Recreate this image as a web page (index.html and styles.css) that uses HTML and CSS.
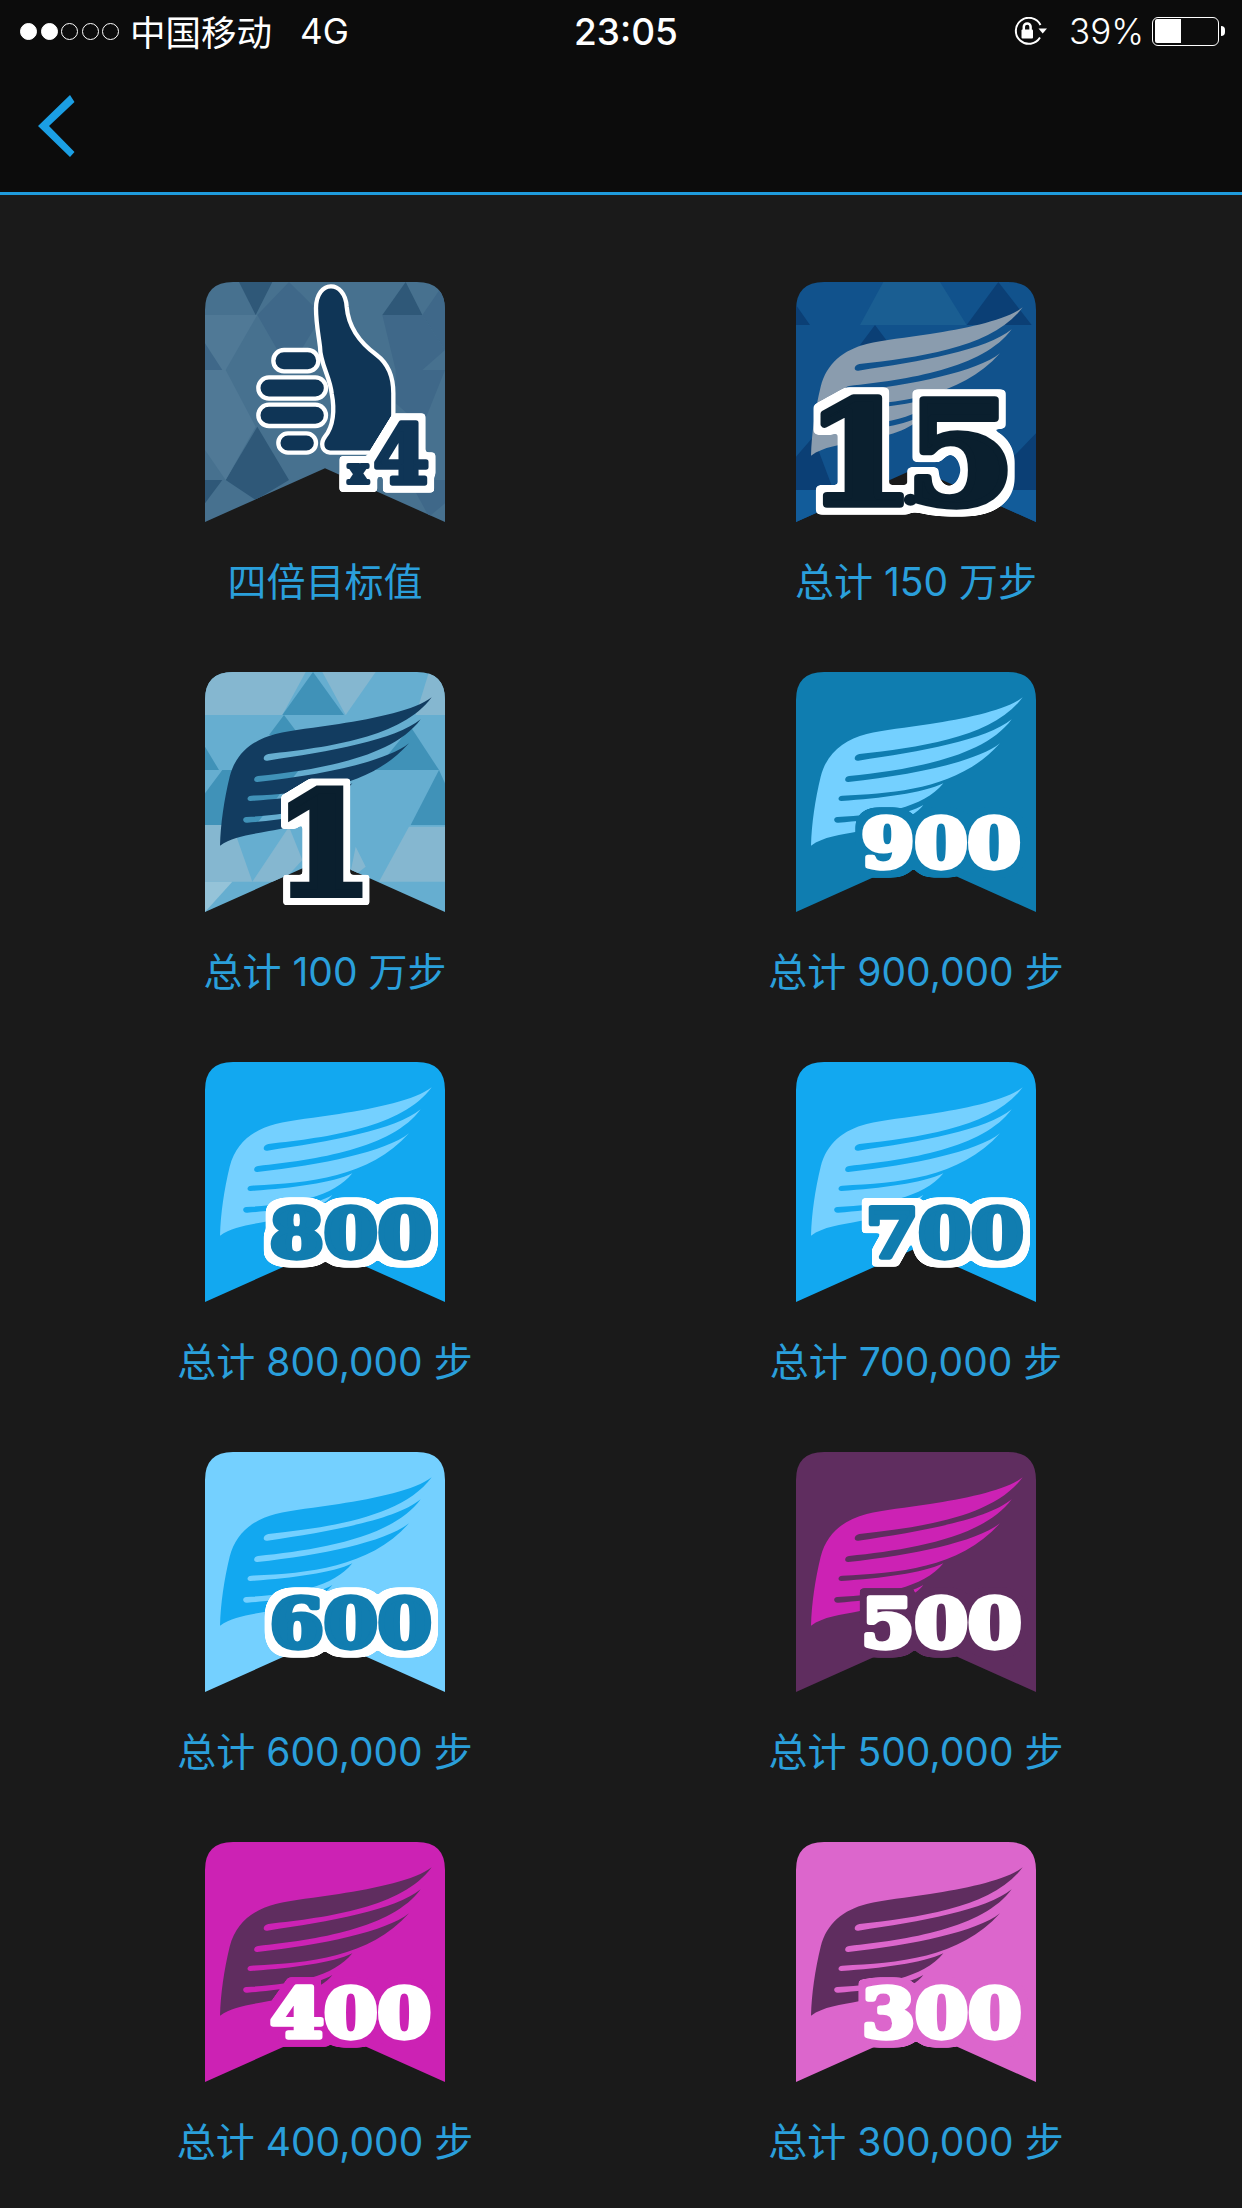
FILE: index.html
```html
<!DOCTYPE html>
<html lang="zh">
<head>
<meta charset="utf-8">
<title>徽章</title>
<link rel="stylesheet" href="styles.css">
</head>
<body>
<svg class="sprite" aria-hidden="true">
  <defs>
    <clipPath id="shape"><path d="M48 756V120Q48 36 132 36H684Q768 36 768 120V756L408 595Z"/></clipPath>
    <path id="badge" d="M48 756V120Q48 36 132 36H684Q768 36 768 120V756L408 595Z"/>
    <path id="wing" d="M728 112C680 150 560 175 450 192C380 203 310 210 260 222C190 240 140 280 122 350C105 420 95 490 93 557C130 530 180 525 240 513C320 500 395 480 430 435C380 465 280 480 175 488C160 490 158 472 172 471C300 465 430 445 490 370C430 400 300 415 185 423C172 424 172 408 187 407C350 400 540 385 660 250C590 305 400 345 205 366C192 367 192 350 207 348C380 330 610 295 695 178C620 240 420 275 235 302C220 304 220 285 238 282C420 262 640 232 728 112Z"/>
    <filter id="haloWhite" x="-30%" y="-40%" width="160%" height="180%" color-interpolation-filters="sRGB">
      <feMorphology in="SourceAlpha" operator="dilate" radius="20"/>
      <feGaussianBlur stdDeviation="5"/>
      <feComponentTransfer result="grown"><feFuncA type="linear" slope="6" intercept="-2.5"/></feComponentTransfer>
      <feFlood flood-color="#ffffff"/><feComposite in2="grown" operator="in"/>
      <feMerge><feMergeNode/><feMergeNode in="SourceGraphic"/></feMerge>
    </filter>
    <filter id="haloBlue" x="-30%" y="-40%" width="160%" height="180%" color-interpolation-filters="sRGB">
      <feMorphology in="SourceAlpha" operator="dilate" radius="20"/>
      <feGaussianBlur stdDeviation="5"/>
      <feComponentTransfer result="grown"><feFuncA type="linear" slope="6" intercept="-2.5"/></feComponentTransfer>
      <feFlood flood-color="#0f7db0"/><feComposite in2="grown" operator="in"/>
      <feMerge><feMergeNode/><feMergeNode in="SourceGraphic"/></feMerge>
    </filter>
    <filter id="haloPlum" x="-30%" y="-40%" width="160%" height="180%" color-interpolation-filters="sRGB">
      <feMorphology in="SourceAlpha" operator="dilate" radius="20"/>
      <feGaussianBlur stdDeviation="5"/>
      <feComponentTransfer result="grown"><feFuncA type="linear" slope="6" intercept="-2.5"/></feComponentTransfer>
      <feFlood flood-color="#5f2d5f"/><feComposite in2="grown" operator="in"/>
      <feMerge><feMergeNode/><feMergeNode in="SourceGraphic"/></feMerge>
    </filter>
    <filter id="haloMagenta" x="-30%" y="-40%" width="160%" height="180%" color-interpolation-filters="sRGB">
      <feMorphology in="SourceAlpha" operator="dilate" radius="20"/>
      <feGaussianBlur stdDeviation="5"/>
      <feComponentTransfer result="grown"><feFuncA type="linear" slope="6" intercept="-2.5"/></feComponentTransfer>
      <feFlood flood-color="#cc22b4"/><feComposite in2="grown" operator="in"/>
      <feMerge><feMergeNode/><feMergeNode in="SourceGraphic"/></feMerge>
    </filter>
    <filter id="haloPink" x="-30%" y="-40%" width="160%" height="180%" color-interpolation-filters="sRGB">
      <feMorphology in="SourceAlpha" operator="dilate" radius="20"/>
      <feGaussianBlur stdDeviation="5"/>
      <feComponentTransfer result="grown"><feFuncA type="linear" slope="6" intercept="-2.5"/></feComponentTransfer>
      <feFlood flood-color="#dc66cc"/><feComposite in2="grown" operator="in"/>
      <feMerge><feMergeNode/><feMergeNode in="SourceGraphic"/></feMerge>
    </filter>
  </defs>
</svg>

<header class="top">
  <div class="status">
    <div class="status-left">
      <span class="dots"><i class="dot on"></i><i class="dot on"></i><i class="dot"></i><i class="dot"></i><i class="dot"></i></span>
      <span class="carrier">中国移动</span>
      <span class="net">4G</span>
    </div>
    <div class="clock">23:05</div>
    <div class="status-right">
      <svg class="lock" viewBox="0 0 34 28" width="34" height="28">
        <path class="lock-ring" d="M27 20.500A13 13 0 1 1 27.500 8"/>
        <path class="lock-solid" d="M34 11.500H25.500L29.700 16.500Z"/>
        <path class="lock-shackle" d="M10.800 13V9.800a3.400 3.400 0 0 1 6.800 0V13"/>
        <rect class="lock-solid" x="8.500" y="12.500" width="11.500" height="9" rx="1"/>
      </svg>
      <span class="pct">39%</span>
      <span class="battery"><span class="battery-fill"></span></span>
      <span class="battery-nub"></span>
    </div>
  </div>
  <nav class="nav">
    <svg class="back" viewBox="0 0 37 62" width="37" height="62"><polygon points="32,0 36.500,7 11,31 36.500,57 32,62 0,31"/></svg>
  </nav>
</header>

<main class="grid">
  <article class="card">
    <svg class="art" viewBox="48 36 720 720">
      <use href="#badge" class="tone-a-base"/>
      <g clip-path="url(#shape)">
        <polygon class="tone-a-dark" points="150,36 250,36 200,135"/>
        <polygon class="tone-a-dark" points="580,135 650,36 700,135"/>
        <polygon class="tone-a-mid" points="700,135 768,36 768,240"/>
        <polygon class="tone-a-mid" points="205,135 300,36 400,135 300,300"/>
        <polygon class="tone-a-light" points="48,135 205,135 110,300 48,300"/>
        <polygon class="tone-a-mid" points="48,220 100,300 48,300"/>
        <polygon class="tone-a-mid" points="580,135 700,135 768,240 700,300 620,300"/>
        <polygon class="tone-a-dark" points="110,630 205,470 300,630 200,690"/>
        <polygon class="tone-a-dark" points="48,630 100,630 48,700"/>
        <polygon class="tone-a-mid" points="660,630 768,630 768,700 720,740"/>
        <polygon class="tone-a-light" points="48,300 110,300 200,470 110,630 48,540"/>
        <polygon class="tone-a-mid" points="620,300 768,300 700,470 620,400"/>
      </g>
      <g class="thumb">
        <path d="M381 115C381 28 468 28 473 110C478 170 508 215 563 255C603 285 613 330 613 370V470C603 500 573 525 553 548H423C398 545 393 520 408 500C433 470 438 420 428 370C423 320 393 280 393 230C388 190 381 160 381 115Z"/>
        <rect x="253" y="240" width="135" height="64" rx="32"/>
        <rect x="208" y="322" width="203" height="64" rx="32"/>
        <rect x="208" y="404" width="203" height="64" rx="32"/>
        <rect x="268" y="490" width="113" height="58" rx="29"/>
      </g>
      <text class="num num-x4" x="478" y="640"><tspan class="x-small">x</tspan><tspan dx="16">4</tspan></text>
    </svg>
    <p class="label">四倍目标值</p>
  </article>

  <article class="card">
    <svg class="art" viewBox="48 36 720 720">
      <use href="#badge" class="tone-b-base"/>
      <g clip-path="url(#shape)">
        <polygon class="tone-b-light" points="310,36 480,36 560,165 240,165"/>
        <polygon class="tone-b-dark" points="48,105 90,165 48,165"/>
        <polygon class="tone-b-dark" points="560,165 655,36 755,165"/>
        <polygon class="tone-b-dark" points="285,165 240,225 330,225"/>
        <polygon class="tone-b-dark" points="700,560 768,490 768,660 700,660"/>
        <polygon class="tone-b-dark" points="48,560 100,500 160,660 48,660"/>
        <polygon class="tone-b-band" points="48,660 768,660 768,756 48,756"/>
      </g>
      <use href="#wing" class="wing-grey"/>
      <text class="num num-big" transform="translate(76 702) scale(1.12 1)">1<tspan class="dot-small">.</tspan>5</text>
    </svg>
    <p class="label">总计 150 万步</p>
  </article>

  <article class="card">
    <svg class="art" viewBox="48 36 720 720">
      <use href="#badge" class="tone-c-base"/>
      <g clip-path="url(#shape)">
        <polygon class="tone-c-light" points="48,36 350,36 280,165 48,165"/>
        <polygon class="tone-c-light" points="400,36 560,36 470,165"/>
        <polygon class="tone-c-light" points="720,36 768,36 768,165 680,165"/>
        <polygon class="tone-c-dark" points="372,36 280,165 465,165"/>
        <polygon class="tone-c-dark" points="285,165 240,225 330,225"/>
        <polygon class="tone-c-dark" points="48,260 90,330 48,330"/>
        <polygon class="tone-c-dark" points="560,330 665,200 750,330"/>
        <polygon class="tone-c-dark" points="750,330 768,370 768,495 665,495"/>
        <polygon class="tone-c-dark" points="100,330 330,330 200,495 48,495 48,400"/>
        <polygon class="tone-c-light" points="48,495 130,495 190,665 48,665"/>
        <polygon class="tone-c-light" points="660,500 768,500 768,665 570,665"/>
        <polygon class="tone-c-light" points="190,665 300,500 340,600 280,665"/>
        <polygon class="tone-c-light" points="500,560 530,620 480,660"/>
        <polygon class="tone-c-pale" points="48,665 130,665 48,756"/>
      </g>
      <use href="#wing" class="wing-navy"/>
      <text class="num num-one" x="258" y="702">1</text>
    </svg>
    <p class="label">总计 100 万步</p>
  </article>

  <article class="card c900">
    <svg class="art" viewBox="48 36 720 720">
      <use href="#badge" class="base"/><use href="#wing" class="wing"/>
      <text class="num num-3 halo-blue" x="244" y="621" textLength="478" lengthAdjust="spacingAndGlyphs">900</text>
    </svg>
    <p class="label">总计 900,000 步</p>
  </article>

  <article class="card c800">
    <svg class="art" viewBox="48 36 720 720">
      <use href="#badge" class="base"/><use href="#wing" class="wing"/>
      <text class="num num-3 num-dark halo-white" x="242" y="621" textLength="486" lengthAdjust="spacingAndGlyphs">800</text>
    </svg>
    <p class="label">总计 800,000 步</p>
  </article>

  <article class="card c800">
    <svg class="art" viewBox="48 36 720 720">
      <use href="#badge" class="base"/><use href="#wing" class="wing"/>
      <text class="num num-3 num-dark halo-white" x="257" y="621" textLength="474" lengthAdjust="spacingAndGlyphs">700</text>
    </svg>
    <p class="label">总计 700,000 步</p>
  </article>

  <article class="card c600">
    <svg class="art" viewBox="48 36 720 720">
      <use href="#badge" class="base"/><use href="#wing" class="wing"/>
      <text class="num num-3 num-dark halo-white" x="242" y="621" textLength="486" lengthAdjust="spacingAndGlyphs">600</text>
    </svg>
    <p class="label">总计 600,000 步</p>
  </article>

  <article class="card c500">
    <svg class="art" viewBox="48 36 720 720">
      <use href="#badge" class="base"/><use href="#wing" class="wing"/>
      <text class="num num-3 halo-plum" x="243" y="621" textLength="481" lengthAdjust="spacingAndGlyphs">500</text>
    </svg>
    <p class="label">总计 500,000 步</p>
  </article>

  <article class="card c400">
    <svg class="art" viewBox="48 36 720 720">
      <use href="#badge" class="base"/><use href="#wing" class="wing"/>
      <text class="num num-3 halo-magenta" x="244" y="621" textLength="482" lengthAdjust="spacingAndGlyphs">400</text>
    </svg>
    <p class="label">总计 400,000 步</p>
  </article>

  <article class="card c300">
    <svg class="art" viewBox="48 36 720 720">
      <use href="#badge" class="base"/><use href="#wing" class="wing"/>
      <text class="num num-3 halo-pink" x="246" y="621" textLength="478" lengthAdjust="spacingAndGlyphs">300</text>
    </svg>
    <p class="label">总计 300,000 步</p>
  </article>
</main>
</body>
</html>
```
FILE: styles.css
```css
* { box-sizing: border-box; }
html, body { margin: 0; padding: 0; }
body {
  width: 1242px;
  height: 2208px;
  overflow: hidden;
  background: #1a1a1a;
  font-family: "Inter", "Noto Sans CJK SC", sans-serif;
}
.sprite { position: absolute; width: 0; height: 0; }

/* header */
.top { background: #0c0c0c; border-bottom: 3px solid #1f9bdc; height: 195px; }
.status {
  height: 62px;
  padding: 0 17px 0 20px;
  display: grid;
  grid-template-columns: 1fr auto 1fr;
  align-items: center;
  color: #fff;
  font-size: 36px;
}
.status-left { display: flex; align-items: center; }
.dots { display: flex; gap: 3.500px; margin-right: 11px; }
.dot { width: 17px; height: 17px; border-radius: 50%; border: 1.500px solid #fff; display: block; }
.dot.on { background: #fff; }
.carrier { font-family: "Noto Sans CJK SC", sans-serif; font-weight: 400; font-size: 35.500px; line-height: 44px; }
.net { margin-left: 28px; font-weight: 400; font-size: 35px; }
.clock { font-weight: 500; font-size: 37px; padding-left: 7px; }
.status-right { display: flex; align-items: center; justify-content: flex-end; }
.lock { display: block; margin-right: 22px; }
.lock-ring { fill: none; stroke: #fff; stroke-width: 2; }
.lock-shackle { fill: none; stroke: #fff; stroke-width: 2.500; }
.lock-solid { fill: #fff; }
.pct { font-weight: 300; font-size: 35px; margin-right: 8px; }
.battery { display: block; width: 67px; height: 29px; border: 1.500px solid #fff; border-radius: 6px; padding: 1.500px; }
.battery-fill { display: block; width: 26px; height: 100%; background: #fff; border-radius: 2px 0 0 2px; }
.battery-nub { display: block; width: 4px; height: 10px; margin-left: 2px; background: #fff; border-radius: 0 5px 5px 0; }
.nav { height: 130px; padding: 33px 0 0 38px; }
.back { display: block; fill: #1b9fe4; }

/* grid */
.grid {
  padding: 87px 0 0 30px;
  display: grid;
  grid-template-columns: 590px 590px;
  column-gap: 1px;
  row-gap: 60px;
}
.card { display: flex; flex-direction: column; align-items: center; }
.art { display: block; width: 240px; height: 240px; overflow: visible; }
.label {
  margin: 30px 0 0;
  font-size: 39px;
  line-height: 60px;
  color: #2a9fdb;
  white-space: nowrap;
}

/* badge palettes */
.c900 { --bg: #0f7db0; --wing: #74d0ff; }
.c800 { --bg: #12a8f0; --wing: #74d0ff; }
.c600 { --bg: #74d0ff; --wing: #12a8f0; }
.c500 { --bg: #5f2d5f; --wing: #cc22b4; }
.c400 { --bg: #cc22b4; --wing: #5f2d5f; }
.c300 { --bg: #dc66cc; --wing: #5f2d5f; }
.base { fill: var(--bg); }
.wing { fill: var(--wing); }

.tone-a-base { fill: #47718f; }
.tone-a-dark { fill: #2f5878; }
.tone-a-mid { fill: #3f6889; }
.tone-a-light { fill: #507996; }
.tone-b-base { fill: #11528c; }
.tone-b-dark { fill: #0b3f75; }
.tone-b-light { fill: #1a5e92; }
.tone-b-band { fill: #125c9a; }
.tone-c-base { fill: #66aed0; }
.tone-c-dark { fill: #4092b8; }
.tone-c-light { fill: #85b7d0; }
.tone-c-pale { fill: #95c3d8; }
.wing-grey { fill: #8a9cae; }
.wing-navy { fill: #123c60; }

.thumb path, .thumb rect { fill: #0f3556; stroke: #fff; stroke-width: 13; }

/* numerals on the badges */
.num {
  font-family: "DejaVu Serif", "Liberation Serif", serif;
  font-weight: 700;
  fill: #fff;
  stroke: #fff;
  stroke-linejoin: round;
}
.num-3 { font-size: 200px; stroke-width: 16; }
.num-dark { fill: #117db0; stroke: #117db0; }
.num-x4 { font-size: 240px; fill: #0f3556; stroke: #0f3556; stroke-width: 16; filter: url(#haloWhite); }
.x-small { font-size: 100px; stroke-width: 12; }
.num-big { font-size: 425px; letter-spacing: -40px; fill: #0a1f2e; stroke: #0a1f2e; stroke-width: 22; filter: url(#haloWhite); }
.dot-small { font-size: 150px; stroke-width: 8; }
.num-one { font-size: 420px; fill: #0a1f2e; stroke: #0a1f2e; stroke-width: 24; stroke-linejoin: miter; filter: url(#haloWhite); }
.halo-white { filter: url(#haloWhite); }
.halo-blue { filter: url(#haloBlue); }
.halo-plum { filter: url(#haloPlum); }
.halo-magenta { filter: url(#haloMagenta); }
.halo-pink { filter: url(#haloPink); }
```
